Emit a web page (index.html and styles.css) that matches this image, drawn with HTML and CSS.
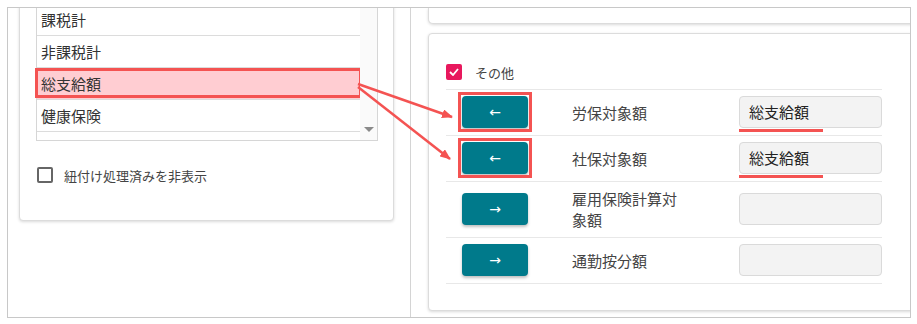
FILE: index.html
```html
<!DOCTYPE html>
<html lang="ja">
<head>
    <meta charset="UTF-8">
    <meta name="viewport" content="width=device-width, initial-scale=1.0">
    <title>項目紐付け</title>
    <link rel="stylesheet" href="styles.css">
</head>
<body>
    <div class="frame">
        <div class="left-pane">
            <div class="card list-card">
                <div class="list">
                    <div class="list-items">
                        <div class="item">課税計</div>
                        <div class="item">非課税計</div>
                        <div class="item item-marked">総支給額</div>
                        <div class="item">健康保険</div>
                    </div>
                    <div class="scrollbar"><span class="scroll-down"></span></div>
                </div>
                <label class="check">
                    <span class="check-box"></span>
                    紐付け処理済みを非表示
                </label>
            </div>
        </div>

        <div class="right-pane">
            <div class="card top-card"></div>
            <div class="card form-card">
                <div class="form">
                    <label class="check">
                        <span class="check-box checked">
                            <svg width="10" height="8" viewBox="0 0 10 8"><path d="M1 4 L4 7 L9 1" fill="none" stroke="#fff" stroke-width="1.8"/></svg>
                        </span>
                        その他
                    </label>

                    <div class="map-rows">
                        <div class="map-row">
                            <button class="move marked">←</button>
                            <span class="map-label">労保対象額</span>
                            <div class="field underlined">総支給額</div>
                        </div>
                        <div class="map-row">
                            <button class="move marked">←</button>
                            <span class="map-label">社保対象額</span>
                            <div class="field underlined">総支給額</div>
                        </div>
                        <div class="map-row">
                            <button class="move">→</button>
                            <span class="map-label">雇用保険計算対象額</span>
                            <div class="field"></div>
                        </div>
                        <div class="map-row">
                            <button class="move">→</button>
                            <span class="map-label">通勤按分額</span>
                            <div class="field"></div>
                        </div>
                    </div>
                </div>
            </div>
        </div>
    </div>

    <!-- 注釈の矢印 -->
    <svg class="arrows" width="917" height="324" viewBox="0 0 917 324">
        <defs>
            <marker id="head" markerWidth="11" markerHeight="9" refX="10" refY="4.5" orient="auto" markerUnits="userSpaceOnUse">
                <path d="M0,0 L11,4.5 L0,9 z" fill="#f45352"/>
            </marker>
        </defs>
        <line x1="358" y1="84" x2="452" y2="117" stroke="#f45352" stroke-width="2.5" marker-end="url(#head)"/>
        <line x1="358" y1="87" x2="450" y2="159" stroke="#f45352" stroke-width="2.5" marker-end="url(#head)"/>
    </svg>
</body>
</html>
```

FILE: styles.css
```css
body {
    margin: 0;
    position: relative;
    background: #fff;
    font-family: "Noto Sans CJK JP", sans-serif;
    color: #333;
}
.frame {
    margin: 7px 0 0 7px;
    width: 904px;
    height: 311px;
    box-sizing: border-box;
    border: 1px solid #c8c8c8;
    display: flex;
    overflow: hidden;
}
.left-pane {
    width: 403px;
    box-sizing: border-box;
    padding-left: 11px;
    border-right: 1px solid #d4d4d4;
    flex-shrink: 0;
}
.right-pane {
    flex: 1;
    padding-left: 17px;
}
.card {
    background: #fff;
    border: 1px solid #dcdcdc;
    border-radius: 4px;
    box-shadow: 0 1px 3px rgba(0,0,0,0.15);
}
.list-card {
    width: 375px;
    box-sizing: border-box;
    margin-top: -22px;
    padding: 16px 16px 37px 16px;
}
.list {
    width: 340px;
    border: 1px solid #d6d6d6;
    display: flex;
}
.list-items {
    flex: 1;
    padding-bottom: 8px;
}
.item {
    position: relative;
    height: 31px;
    line-height: 31px;
    padding-left: 4px;
    border-bottom: 1px solid #dcdcdc;
    font-size: 15px;
    color: #333;
}
.item-marked {
    background: #ffcdd2;
}
.item-marked::after {
    content: "";
    position: absolute;
    left: -2px;
    right: -2px;
    top: 0;
    bottom: 1px;
    border: 3px solid #f45352;
}
.scrollbar {
    width: 17px;
    background: #fafafa;
    position: relative;
}
.scroll-down {
    position: absolute;
    left: 4px;
    bottom: 8px;
    border-left: 5px solid transparent;
    border-right: 5px solid transparent;
    border-top: 5px solid #8a8a8a;
}
.check {
    display: flex;
    align-items: center;
    gap: 11px;
    height: 16px;
    font-size: 13px;
    color: #444;
}
.list-card .check {
    margin-top: 26px;
    padding-left: 1px;
}
.check-box {
    width: 16px;
    height: 16px;
    box-sizing: border-box;
    border: 2px solid #666;
    border-radius: 2px;
    display: flex;
    align-items: center;
    justify-content: center;
}
.check-box.checked {
    background: #e8185d;
    border-color: #e8185d;
}
.top-card {
    height: 15px;
    border-top: none;
    border-radius: 0 0 5px 5px;
    margin-right: -30px;
}
.form-card {
    margin-top: 9px;
    margin-right: -30px;
    padding: 30px 0 26px 17px;
}
.form {
    width: 436px;
}
.form .check {
    margin-bottom: 9px;
    gap: 13px;
}
.map-rows {
    border-top: 1px solid #e8e8e8;
}
.map-row {
    display: grid;
    grid-template-columns: 126px 167px 143px;
    align-items: center;
    padding: 6px 0 7px;
    border-bottom: 1px solid #e8e8e8;
}
.move {
    position: relative;
    width: 66px;
    height: 32px;
    margin-left: 16px;
    border: none;
    border-radius: 4px;
    background: #007a8b;
    color: #fff;
    font-size: 14px;
    font-family: "DejaVu Sans", sans-serif;
    box-shadow: 0 2px 3px rgba(0,0,0,0.25);
    cursor: pointer;
}
.move.marked::after {
    content: "";
    position: absolute;
    left: -4px;
    right: -4px;
    top: -4px;
    bottom: -4px;
    border: 3px solid #f45352;
}
.map-label {
    width: 110px;
    font-size: 15px;
    line-height: 21px;
    color: #444;
}
.field {
    position: relative;
    height: 32px;
    box-sizing: border-box;
    border: 1px solid #dadada;
    border-radius: 4px;
    background: #f3f3f3;
    padding-left: 9px;
    font-size: 15px;
    line-height: 30px;
    color: #222;
}
.underlined::after {
    content: "";
    position: absolute;
    left: -1px;
    width: 84px;
    bottom: -5px;
    height: 3px;
    background: #f45352;
}
.arrows {
    position: absolute;
    top: 0;
    left: 0;
    pointer-events: none;
}
```
